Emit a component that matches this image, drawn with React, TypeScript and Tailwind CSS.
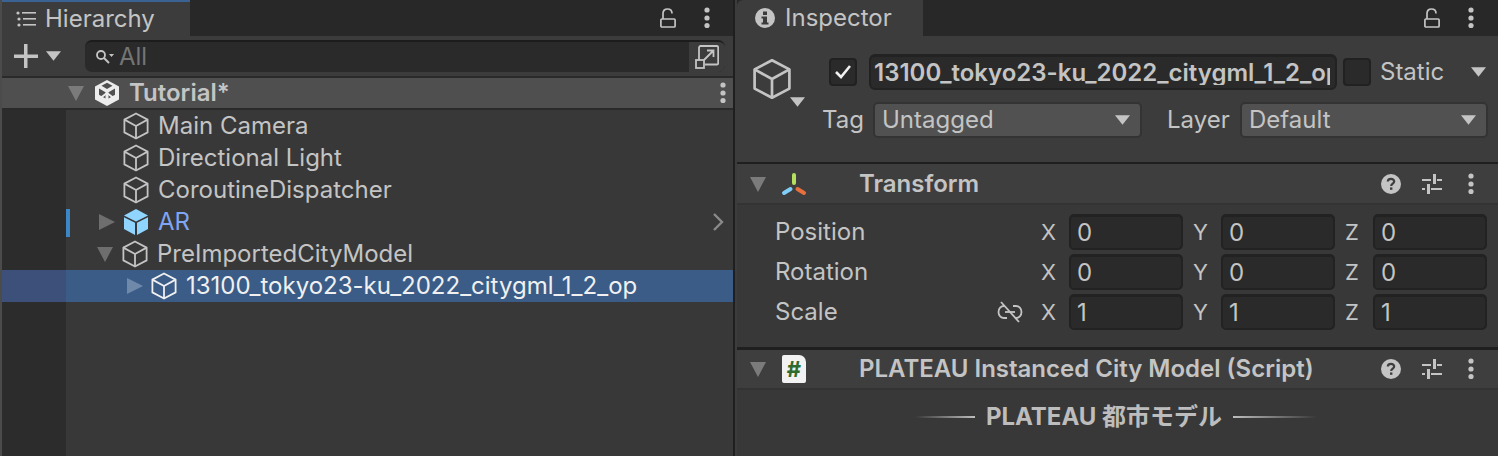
import React from "react";

const Cube = ({ className = "" }: { className?: string }) => (
  <svg viewBox="0 0 26 28" className={className} fill="none" stroke="currentColor" strokeWidth="1.8" strokeLinejoin="round">
    <path d="M13 1.5 24.6 7.6V20.4L13 26.5 1.4 20.4V7.6Z" />
    <path d="M1.4 7.6 13 14 24.6 7.6M13 14V26.5" />
  </svg>
);

const SolidCube = () => (
  <svg viewBox="0 0 26 28" className="h-[28px] w-[26px] shrink-0">
    <path d="M13 1 25 7.4 13 13.4 1 7.4Z" fill="#8fd5ff" />
    <path d="M1 9.2 12 14.8V27L1 21Z" fill="#8fd5ff" />
    <path d="M25 9.2 14 14.8V27L25 21Z" fill="#8fd5ff" />
  </svg>
);

const Caret = ({ open, className = "" }: { open: boolean; className?: string }) => (
  <svg viewBox="0 0 16 16" className={`h-[16px] w-[16px] shrink-0 ${className}`} fill="currentColor">
    {open ? <path d="M0 1H16L8 16Z" /> : <path d="M0 0 16 8 0 16Z" />}
  </svg>
);

const SmallDown = ({ className = "" }: { className?: string }) => (
  <svg viewBox="0 0 14 9" className={`h-[9px] w-[14px] shrink-0 ${className}`} fill="currentColor">
    <path d="M0 0H14L7 9Z" />
  </svg>
);

const Kebab = () => (
  <svg viewBox="0 0 8 22" className="h-[22px] w-[8px] shrink-0" fill="#c4c4c4">
    <circle cx="4" cy="3" r="2.6" />
    <circle cx="4" cy="11" r="2.6" />
    <circle cx="4" cy="18.5" r="2.6" />
  </svg>
);

const Lock = () => (
  <svg viewBox="0 0 16 20" className="h-[20px] w-[16px] shrink-0" fill="none" stroke="#c4c4c4" strokeWidth="1.7">
    <rect x="0.9" y="11" width="14.2" height="8" rx="1" />
    <path d="M3 11V5.5C3 2.5 5 1 7.5 1S12 2.5 12 5.5" />
  </svg>
);

const Help = () => (
  <svg viewBox="0 0 20 20" className="h-[20px] w-[20px] shrink-0">
    <circle cx="10" cy="10" r="10" fill="#c4c4c4" />
    <path d="M6.8 7.6C6.8 5.8 8.2 4.8 10 4.8S13.2 5.9 13.2 7.4C13.2 9.6 10.2 9.6 10.2 12" fill="none" stroke="#3e3e3e" strokeWidth="2.2" />
    <rect x="9" y="13.4" width="2.4" height="2.4" fill="#3e3e3e" />
  </svg>
);

const Sliders = () => (
  <svg viewBox="0 0 20 20" className="h-[20px] w-[20px] shrink-0" fill="#c4c4c4">
    <rect x="0" y="5" width="9" height="2" />
    <rect x="15" y="5" width="5" height="2" />
    <rect x="11" y="0" width="3" height="10" />
    <rect x="0" y="14" width="3" height="2" />
    <rect x="9" y="14" width="11" height="2" />
    <rect x="5" y="10" width="3" height="10" />
  </svg>
);

const ComponentTools = () => (
  <div className="ml-auto flex items-center">
    <Help />
    <div className="ml-[21px]">
      <Sliders />
    </div>
    <div className="ml-[25px] mr-[23px]">
      <Kebab />
    </div>
  </div>
);

const ListIcon = () => (
  <svg viewBox="0 0 20 16" className="h-[16px] w-[20px] shrink-0" fill="#c4c4c4">
    <circle cx="2" cy="2" r="1.6" />
    <circle cx="3" cy="8" r="1.6" />
    <circle cx="3" cy="14" r="1.6" />
    <rect x="6" y="1" width="14" height="1.6" />
    <rect x="7" y="7" width="13" height="1.6" />
    <rect x="7" y="13" width="13" height="1.6" />
  </svg>
);

const SearchIcon = () => (
  <svg viewBox="0 0 20 16" className="h-[16px] w-[20px] shrink-0" fill="none" stroke="#c4c4c4">
    <circle cx="6" cy="6" r="4" strokeWidth="1.8" />
    <path d="M9 9 14 14" strokeWidth="2" />
    <path d="M14 5H19L16.500 8Z" fill="#c4c4c4" stroke="none" />
  </svg>
);

const PopOut = () => (
  <svg viewBox="0 0 24 24" className="h-[24px] w-[24px]" fill="none" stroke="#c4c4c4" strokeWidth="1.8">
    <path d="M4 15V3C4 2 4.500 1 5.500 1H22C23 1 23.200 2 23.200 3V18C23.200 19 23 19.500 22 19.500H10" />
    <rect x="1" y="15" width="8" height="8" />
    <path d="M9 15 18 6M12 5.500H18.500V12" />
  </svg>
);

const UnityLogo = () => (
  <svg viewBox="0 0 26 28" className="h-[28px] w-[26px] shrink-0">
    <path d="M13 1 25 7.500V20.500L13 27 1 20.500V7.500Z" fill="#ececec" />
    <path d="M5 9.500 11.500 13.300V19.500L5 15.800Z" fill="#4f4f4f" />
    <path d="M21 9.500 14.500 13.300V19.500L21 15.800Z" fill="#4f4f4f" />
    <path d="M7.500 6.800 13 3.800 18.500 6.800 13 10Z" fill="#4f4f4f" />
    <path d="M13 10V14M13 14 5 20M13 14 21 20" stroke="#ececec" strokeWidth="2" />
  </svg>
);

const TransformIcon = () => (
  <svg viewBox="0 0 26 24" className="h-[24px] w-[26px] shrink-0" fill="none" strokeWidth="4" strokeLinecap="round">
    <path d="M13 3V11" stroke="#b4e05e" />
    <path d="M3 21 9.500 17" stroke="#80cdf9" />
    <path d="M16.500 17 23 21" stroke="#e8703f" />
  </svg>
);

const ScriptIcon = () => (
  <div className="flex h-[28px] w-[24px] shrink-0 items-center justify-center rounded-[2px] rounded-tr-[7px] bg-[#f2f2f2] text-[22px] leading-none font-bold text-[#2f6b2c]">
    #
  </div>
);

const UnlinkIcon = () => (
  <svg viewBox="0 0 26 22" className="h-[22px] w-[26px] shrink-0" fill="none" stroke="#c4c4c4" strokeWidth="1.8">
    <path d="M8 5H7C4 5 1.500 7.500 1.500 11S4 17 7 17H10M16 5H19C22 5 24.500 7.500 24.500 11S22 17 19 17H18" />
    <path d="M8 11H18" />
    <path d="M4 1 22 21" />
  </svg>
);

type Node = { name: string; x: number; caret?: "open" | "closed"; prefab?: boolean; selected?: boolean };

const nodes: Node[] = [
  { name: "Main Camera", x: 57 },
  { name: "Directional Light", x: 57 },
  { name: "CoroutineDispatcher", x: 57 },
  { name: "AR", x: 57, caret: "closed", prefab: true },
  { name: "PreImportedCityModel", x: 57, caret: "open" },
  { name: "13100_tokyo23-ku_2022_citygml_1_2_op", x: 85, caret: "closed", selected: true },
];

function HierarchyRow({ node }: { node: Node }) {
  return (
    <div className={`flex h-[32px] ${node.selected ? "bg-[#3a5c87] text-[#f0f0f0]" : ""}`}>
      <div className={`h-full w-[64px] shrink-0 ${node.selected ? "bg-[#3c5079]" : "bg-[#2c2c2c]"}`} />
      <div className="relative flex min-w-0 flex-1 items-center">
        {node.prefab && <div className="absolute top-[3px] left-0 h-[28px] w-[4px] bg-[#3d86c6]" />}
        <div className="flex w-full items-center" style={{ paddingLeft: node.x - (node.caret === "open" ? 26 : 0) }}>
          {node.caret === "open" && <Caret open className="mr-[9px] text-[#6e6e6e]" />}
          {node.caret === "closed" && (
            <Caret open={false} className={`-ml-[24px] mr-[8px] ${node.selected ? "text-[#6f89aa]" : "text-[#6e6e6e]"}`} />
          )}
          {node.prefab ? <SolidCube /> : <Cube className="h-[28px] w-[26px] shrink-0" />}
          <span className={`ml-[9px] whitespace-nowrap ${node.prefab ? "text-[#7fa6f2]" : ""}`}>{node.name}</span>
        </div>
        {node.prefab && (
          <svg viewBox="0 0 12 18" className="absolute right-[9px] h-[18px] w-[12px]" fill="none" stroke="#8a8a8a" strokeWidth="2.4">
            <path d="M2 1 10 9 2 17" />
          </svg>
        )}
      </div>
    </div>
  );
}

function Hierarchy() {
  return (
    <div className="flex h-full w-[733px] shrink-0 flex-col border-l-2 border-[#4b4b4b]">
      <div className="flex h-[36px] shrink-0 items-center bg-[#282828]">
        <div className="flex h-full w-[188px] items-center border-t-2 border-[#3a6394] bg-[#3c3c3c] pl-[14px]">
          <ListIcon />
          <span className="ml-[9px]">Hierarchy</span>
        </div>
        <div className="ml-auto flex items-center">
          <Lock />
          <div className="ml-[27px] mr-[22px]">
            <Kebab />
          </div>
        </div>
      </div>
      <div className="flex h-[40px] shrink-0 items-center bg-[#3c3c3c] pr-[8px] pl-[12px]">
        <svg viewBox="0 0 24 20" className="h-[24px] w-[24px]" fill="#c4c4c4">
          <rect x="0" y="8.500" width="24" height="3.500" />
          <rect x="10" y="-2" width="3.500" height="24" />
        </svg>
        <SmallDown className="ml-[8px] h-[10px] w-[15px] text-[#c4c4c4]" />
        <div className="ml-[24px] flex h-[32px] flex-1 items-center overflow-hidden rounded-l-[7px] rounded-r-[7px] border-t-2 border-[#1c1c1c] bg-[#2a2a2a] pl-[10px] text-[#757575]">
          <SearchIcon />
          <span className="ml-[4px]">All</span>
          <div className="ml-auto flex h-full w-[36px] items-center justify-center bg-[#3c3c3c]">
            <PopOut />
          </div>
        </div>
      </div>
      <div className="mt-0 h-[2px] shrink-0 bg-[#2a2a2a]" />
      <div className="flex h-[30px] shrink-0 items-center bg-[#4f4f4f] pl-[66px] font-semibold">
        <Caret open className="text-[#7b7b7b]" />
        <span className="ml-[10px]">
          <UnityLogo />
        </span>
        <span className="ml-[9px]">Tutorial*</span>
        <div className="ml-auto mr-[6px]">
          <Kebab />
        </div>
      </div>
      <div className="h-[2px] shrink-0 bg-[#2a2a2a]" />
      <div className="flex flex-1 flex-col bg-[#383838]">
        {nodes.map((n) => (
          <HierarchyRow key={n.name} node={n} />
        ))}
        <div className="flex-1">
          <div className="h-full w-[64px] bg-[#2c2c2c]" />
        </div>
      </div>
    </div>
  );
}

function Dropdown({ label, className }: { label: string; className: string }) {
  return (
    <div className={`flex h-[36px] items-center justify-between rounded-[5px] border-2 border-[#333333] bg-[#515151] pr-[10px] pl-[7px] ${className}`}>
      <span>{label}</span>
      <SmallDown className="h-[10px] w-[15px] text-[#c4c4c4]" />
    </div>
  );
}

function Check({ on }: { on: boolean }) {
  return (
    <div className="flex h-[28px] w-[28px] shrink-0 items-center justify-center rounded-[4px] border-2 border-[#212121] bg-[#2a2a2a]">
      {on && (
        <svg viewBox="0 0 16 14" className="h-[14px] w-[16px]" fill="none" stroke="#f0f0f0" strokeWidth="2.6">
          <path d="M1 7 6 12 15 1" />
        </svg>
      )}
    </div>
  );
}

function Vec({ label, values, icon }: { label: string; values: string[]; icon?: boolean }) {
  const axes = ["X", "Y", "Z"];
  return (
    <div className="flex h-[36px] items-center">
      <span className="ml-[38px] w-[222px] shrink-0">{label}</span>
      <div className="flex w-[44px] shrink-0 justify-start">{icon && <UnlinkIcon />}</div>
      {values.map((v, i) => (
        <div key={axes[i]} className={`flex items-center ${i > 0 ? "ml-[10px]" : ""}`}>
          <span className="w-[28px] shrink-0 text-[22px]">{axes[i]}</span>
          <div className="flex h-[36px] w-[114px] items-center rounded-[5px] border-2 border-t-[3px] border-[#222222] bg-[#2a2a2a] pl-[6px]">{v}</div>
        </div>
      ))}
    </div>
  );
}

function Inspector() {
  return (
    <div className="flex h-full min-w-0 flex-1 flex-col">
      <div className="flex h-[36px] shrink-0 items-center bg-[#282828]">
        <div className="flex h-full w-[186px] items-center rounded-tl-[6px] bg-[#3c3c3c] pl-[18px]">
          <svg viewBox="0 0 20 20" className="h-[20px] w-[20px]">
            <circle cx="10" cy="10" r="10" fill="#c4c4c4" />
            <rect x="8" y="3.500" width="4" height="3.500" fill="#3c3c3c" />
            <path d="M6.500 8.500H12V14.500H13.500V16.500H6.500V14.500H8V10.500H6.500Z" fill="#3c3c3c" />
          </svg>
          <span className="ml-[10px]">Inspector</span>
        </div>
        <div className="ml-auto flex items-center">
          <Lock />
          <div className="ml-[27px] mr-[23px]">
            <Kebab />
          </div>
        </div>
      </div>
      <div className="flex h-[126px] shrink-0 bg-[#3c3c3c]">
        <div className="relative w-[85px] shrink-0">
          <Cube className="absolute top-[22px] left-[15px] h-[42px] w-[40px]" />
          <SmallDown className="absolute top-[61px] left-[53px] h-[10px] w-[15px] text-[#c4c4c4]" />
        </div>
        <div className="flex min-w-0 flex-1 flex-col">
          <div className="mt-[18px] flex h-[36px] items-center">
            <div className="ml-[7px]">
              <Check on />
            </div>
            <div className="ml-[12px] flex h-[36px] w-[468px] shrink-0 items-center overflow-hidden rounded-[6px] border-2 border-t-[3px] border-[#222222] bg-[#2a2a2a] pl-[3px] font-semibold whitespace-nowrap">
              <span className="w-[456px] shrink-0 overflow-hidden">13100_tokyo23-ku_2022_citygml_1_2_op</span>
            </div>
            <div className="ml-[6px]">
              <Check on={false} />
            </div>
            <span className="ml-[9px]">Static</span>
            <SmallDown className="ml-[27px] h-[10px] w-[15px] text-[#c4c4c4]" />
          </div>
          <div className="mt-[12px] flex h-[36px] items-center">
            <span className="w-[51px] shrink-0">Tag</span>
            <Dropdown label="Untagged" className="w-[269px]" />
            <span className="ml-[25px] w-[73px] shrink-0">Layer</span>
            <Dropdown label="Default" className="w-[248px]" />
          </div>
        </div>
      </div>
      <div className="h-[2px] shrink-0 bg-[#1f1f1f]" />
      <div className="flex h-[41px] shrink-0 items-center border-b-2 border-[#333333] bg-[#3e3e3e] pl-[13px] font-semibold">
        <Caret open className="text-[#7b7b7b]" />
        <div className="ml-[15px] w-[71px] shrink-0">
          <TransformIcon />
        </div>
        <span className="ml-[7px]">Transform</span>
        <ComponentTools />
      </div>
      <div className="flex h-[142px] shrink-0 flex-col gap-[4px] bg-[#383838] pt-[9px]">
        <Vec label="Position" values={["0", "0", "0"]} />
        <Vec label="Rotation" values={["0", "0", "0"]} />
        <Vec label="Scale" values={["1", "1", "1"]} icon />
      </div>
      <div className="h-[3px] shrink-0 bg-[#1f1f1f]" />
      <div className="flex h-[40px] shrink-0 items-center border-b-2 border-[#333333] bg-[#3e3e3e] pl-[13px] font-semibold">
        <Caret open className="text-[#7b7b7b]" />
        <div className="ml-[16px] w-[70px] shrink-0">
          <ScriptIcon />
        </div>
        <span className="ml-[7px]">PLATEAU Instanced City Model (Script)</span>
        <ComponentTools />
      </div>
      <div className="flex flex-1 justify-center bg-[#383838] pt-[9px] pr-[3px]">
        <div className="flex h-[36px] items-center font-bold text-[#bdbdbd]">
          <div className="h-[2px] w-[60px] bg-gradient-to-r from-transparent to-[#bdbdbd]" />
          <span className="mx-[11px] whitespace-nowrap">PLATEAU 都市モデル</span>
          <div className="h-[2px] w-[84px] bg-gradient-to-l from-transparent to-[#bdbdbd]" />
        </div>
      </div>
    </div>
  );
}

export default function App() {
  return (
    <div className="flex h-[456px] w-[1498px] overflow-hidden bg-[#1f1f1f] text-[24px] leading-none text-[#c4c4c4] [font-family:Inter,'Noto_Sans_CJK_JP',sans-serif]">
      <Hierarchy />
      <div className="w-[2px] shrink-0 bg-[#1f1f1f]" />
      <div className="w-[2px] shrink-0 bg-[#3c3c3c]" />
      <Inspector />
    </div>
  );
}
